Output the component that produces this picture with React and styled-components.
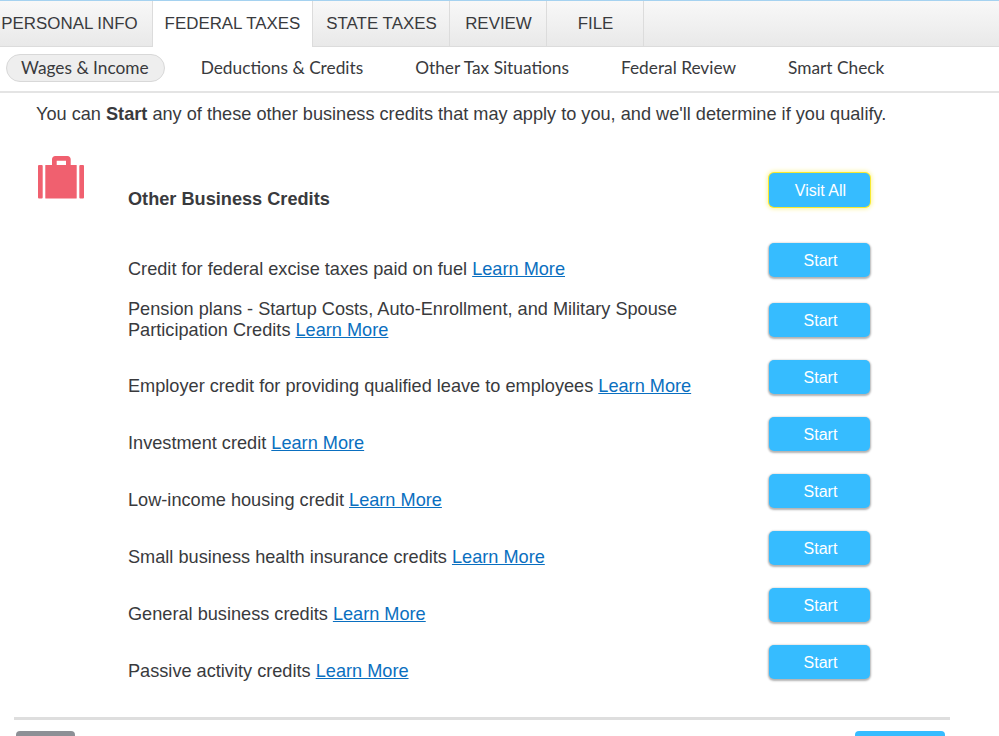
import React from "react"
import styled, { createGlobalStyle } from "styled-components"

const tabs = [
  { label: "PERSONAL INFO", width: 153, first: true },
  { label: "FEDERAL TAXES", width: 160, active: true },
  { label: "STATE TAXES", width: 136 },
  { label: "REVIEW", width: 96 },
  { label: "FILE", width: 96 },
]

const subTabs = [
  { label: "Wages & Income", active: true },
  { label: "Deductions & Credits" },
  { label: "Other Tax Situations" },
  { label: "Federal Review" },
  { label: "Smart Check" },
]

const credits = [
  { lines: ["Credit for federal excise taxes paid on fuel"] },
  {
    lines: [
      "Pension plans - Startup Costs, Auto-Enrollment, and Military Spouse",
      "Participation Credits",
    ],
    tall: true,
  },
  { lines: ["Employer credit for providing qualified leave to employees"] },
  { lines: ["Investment credit"] },
  { lines: ["Low-income housing credit"] },
  { lines: ["Small business health insurance credits"] },
  { lines: ["General business credits"] },
  { lines: ["Passive activity credits"] },
]

const App = () => (
  <Page>
    <GlobalStyle />
    <TopBar>
      {tabs.map(({ label, width, active, first }) => (
        <Tab key={label} $width={width} $active={active} $first={first}>
          {label}
        </Tab>
      ))}
    </TopBar>
    <SubBar>
      {subTabs.map(({ label, active }) => (
        <SubTab key={label} $active={active}>
          {label}
        </SubTab>
      ))}
    </SubBar>
    <Content>
      <Intro>
        You can <strong>Start</strong> any of these other business credits that
        may apply to you, and we'll determine if you qualify.
      </Intro>
      <HeaderRow>
        <IconCell>
          <svg width="46" height="43" viewBox="0 0 46 43" fill="#f0606f">
            <rect x="0" y="9" width="4.7" height="33.5" rx="1" />
            <rect x="7.3" y="9" width="31.4" height="33.5" rx="0.6" />
            <rect x="41.3" y="9" width="4.7" height="33.5" rx="1" />
            <path d="M14 9V3.200C14 1.400 15.400 0 17.200 0h12.300c1.800 0 3.200 1.400 3.200 3.200V9H28V4.700h-9.300V9z" />
          </svg>
        </IconCell>
        <HeaderTitle>Other Business Credits</HeaderTitle>
        <ActionButton $focused>Visit All</ActionButton>
      </HeaderRow>
      <CreditList>
        {credits.map(({ lines, tall }) => (
          <CreditRow key={lines[0]} $tall={tall}>
            <CreditText $tall={tall}>
              {lines.map((line, i) => (
                <React.Fragment key={line}>
                  {i > 0 && <br />}
                  {line}
                </React.Fragment>
              ))}{" "}
              <LearnMore href="#">Learn More</LearnMore>
            </CreditText>
            <ActionButton>Start</ActionButton>
          </CreditRow>
        ))}
      </CreditList>
      <Divider />
      <Footer>
        <BackButton aria-label="Back" />
        <ContinueButton aria-label="Continue" />
      </Footer>
    </Content>
  </Page>
)

export default App

const GlobalStyle = createGlobalStyle`
  html, body {
    margin: 0;
    height: 736px;
    overflow: hidden;
    background: #fff;
  }
  * {
    box-sizing: border-box;
  }
`

const Page = styled.div`
  width: 999px;
  height: 736px;
  overflow: hidden;
  font-family: "Liberation Sans", Arial, sans-serif;
  color: #393a3d;
`

const TopBar = styled.div`
  display: flex;
  height: 47px;
  border-top: 1px solid #a5d2f0;
  border-bottom: 1px solid #dcdcdc;
  background: linear-gradient(#f8f8f8, #e9e9e9);
`

const Tab = styled.div`
  display: flex;
  align-items: center;
  justify-content: center;
  width: ${p => p.$width}px;
  height: ${p => (p.$active ? 46 : 45)}px;
  padding-right: ${p => (p.$first ? 13 : 0)}px;
  border-right: 1px solid #dcdcdc;
  margin-right: ${p => (p.$first ? 0 : 1)}px;
  font-size: 16.9px;
  white-space: nowrap;
  background: ${p => (p.$active ? "#fff" : "transparent")};
`

const SubBar = styled.div`
  display: flex;
  align-items: center;
  gap: 36px;
  height: 46px;
  padding: 0 0 3px 6px;
  border-bottom: 2px solid #e4e4e4;
`

const SubTab = styled.div`
  display: flex;
  align-items: center;
  height: 28px;
  margin-right: ${p => (p.$active ? 0 : 16)}px;
  padding: 0 ${p => (p.$active ? "15px 0 14px" : "0")};
  border: ${p => (p.$active ? "1px solid #d8d8d8" : "none")};
  border-radius: 14px;
  background: ${p => (p.$active ? "#eeeeee" : "transparent")};
  font-family: Lato, sans-serif;
  font-size: 17.3px;
  white-space: nowrap;
`

const Content = styled.div`
  padding: 11px 49px 0 14px;
`

const Intro = styled.p`
  margin: 0 0 31px 22px;
  font-size: 18.17px;
  line-height: 21px;
  white-space: nowrap;
`

const HeaderRow = styled.div`
  display: flex;
  align-items: flex-end;
  height: 51px;
`

const IconCell = styled.div`
  align-self: flex-start;
  width: 90px;
  margin-left: 24px;
  line-height: 0;
`

const HeaderTitle = styled.div`
  width: 641px;
  margin-bottom: -3px;
  font-size: 18.17px;
  font-weight: 700;
  line-height: 21px;
`

const CreditList = styled.div`
  display: flex;
  flex-direction: column;
  gap: 23px;
  margin-top: 36px;
  padding-left: 114px;
`

const CreditRow = styled.div`
  display: flex;
  align-items: flex-end;
  margin-top: ${p => (p.$tall ? -1 : 0)}px;
`

const CreditText = styled.div`
  width: 641px;
  margin-bottom: ${p => (p.$tall ? -4 : -3)}px;
  font-size: 18.17px;
  line-height: 21px;
`

const LearnMore = styled.a`
  color: #0a6fc0;
  text-decoration: underline;
`

const ActionButton = styled.button`
  flex: none;
  width: 101px;
  height: 34px;
  padding: 2px 0 0 2px;
  border: none;
  border-radius: 5px;
  background: #36bcff;
  color: #fff;
  font-family: "Liberation Sans", Arial, sans-serif;
  font-size: 16px;
  box-shadow: ${p =>
    p.$focused
      ? "0 0 0 1px #f7e92e, 0 0 4px 2px #fbf3a0"
      : "0 1px 2px 1px rgba(0, 0, 0, 0.3)"};
`

const Divider = styled.div`
  width: 936px;
  height: 3px;
  margin-top: 38px;
  background: #dedede;
`

const Footer = styled.div`
  display: flex;
  justify-content: space-between;
  width: 936px;
  margin-top: 11px;
  padding: 0 5px 0 2px;
`

const BackButton = styled.button`
  width: 59px;
  height: 36px;
  border: none;
  border-radius: 4px;
  background: #8d9096;
`

const ContinueButton = styled.button`
  width: 90px;
  height: 36px;
  border: none;
  border-radius: 4px;
  background: #36bcff;
`
